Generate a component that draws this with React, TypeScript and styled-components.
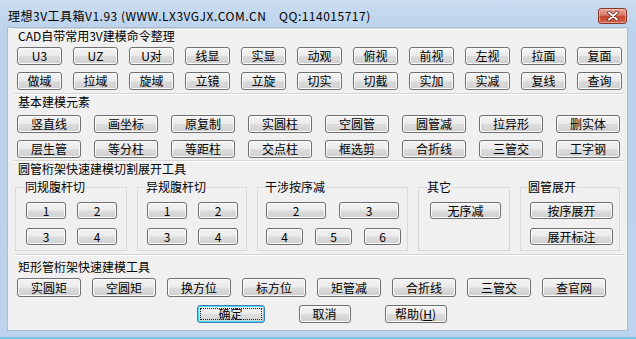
import React from 'react';
import styled, { createGlobalStyle } from 'styled-components';

const GlobalStyle = createGlobalStyle`
  html, body {
    margin: 0;
    padding: 0;
    background: #ffffff;
  }
  body {
    font-family: "Noto Sans CJK SC", "DejaVu Sans", sans-serif;
    font-size: 12px;
    color: #000;
  }
`;

const Window = styled.div`
  width: 636px;
  height: 339px;
  box-sizing: border-box;
  display: flex;
  flex-direction: column;
  background: linear-gradient(to bottom, #cadcf0 0px, #bcd3ec 30px, #bdd4ec 100%);
  border-bottom: 2px solid #78c6ee;
`;

const TitleBar = styled.div`
  height: 28px;
  box-sizing: border-box;
  padding: 3px 9px 0 8px;
  display: flex;
  align-items: center;
  justify-content: space-between;
`;

const Title = styled.div`
  font-size: 12px;
  line-height: 14px;
  letter-spacing: 0.5px;
  white-space: pre;
  color: #000;
`;

const CloseButton = styled.div`
  width: 29px;
  height: 16px;
  box-sizing: border-box;
  border: 1px solid #86352a;
  border-radius: 3px;
  background: linear-gradient(to bottom, #eaa797 0%, #d6796a 45%, #c5432c 50%, #d4664a 100%);
  box-shadow: inset 0 0 0 1px rgba(255, 220, 210, 0.45);
  display: flex;
  align-items: center;
  justify-content: center;
`;

const Client = styled.div`
  flex: 1;
  margin: 0 9px 7px 8px;
  padding: 0 3px 0 6px;
  background: #f0f0f0;
  box-shadow: 0 0 0 1px #a9bdd3;
  display: flex;
  flex-direction: column;
`;

const Section = styled.div<{ $pt: number; $pb: number }>`
  border-top: 1px solid #d5d5d5;
  box-shadow: inset 0 1px 0 #ffffff;
  padding: ${(p) => p.$pt}px 0 ${(p) => p.$pb}px 0;
`;

const SectionTitle = styled.div`
  height: 14px;
  line-height: 14px;
  padding-left: 4px;
  font-size: 12px;
`;

const ButtonRows = styled.div<{ $mt: number }>`
  margin-top: ${(p) => p.$mt}px;
  padding-left: 3px;
  display: flex;
  flex-direction: column;
  gap: 7px;
`;

const ButtonRow = styled.div<{ $gap: number }>`
  display: flex;
  gap: ${(p) => p.$gap}px;
`;

const Btn = styled.button<{ $w: number; $h: number }>`
  width: ${(p) => p.$w}px;
  height: ${(p) => p.$h}px;
  box-sizing: border-box;
  padding: 0;
  border: 1px solid #707070;
  border-radius: 3px;
  background: linear-gradient(to bottom, #f3f3f3 0%, #ebebeb 48%, #dddddd 52%, #cfcfcf 100%);
  box-shadow: inset 0 0 0 1px #fbfbfb;
  font-family: "Noto Sans CJK SC", "DejaVu Sans", sans-serif;
  font-size: 12px;
  line-height: 12px;
  color: #000;
  white-space: nowrap;
  display: flex;
  align-items: center;
  justify-content: center;
  flex-shrink: 0;
`;

const DefaultBtn = styled(Btn)`
  border-color: #3c7fb1;
  box-shadow: inset 0 0 0 1px #48d8fb;
  outline: 1px dotted #202020;
  outline-offset: -4px;
`;

const GroupsRow = styled.div`
  margin-top: 4px;
  padding-left: 1px;
  display: flex;
  gap: 10px;
  align-items: stretch;
`;

const Group = styled.fieldset<{ $w: number }>`
  width: ${(p) => p.$w}px;
  box-sizing: border-box;
  margin: 0;
  padding: 8px 0 5px 0;
  border: 1px solid #d9d9d9;
  border-radius: 0;
  min-width: 0;
`;

const GroupLegend = styled.legend<{ $ml: number }>`
  margin-left: ${(p) => p.$ml}px;
  padding: 0 1px 0 0;
  height: 14px;
  line-height: 14px;
  font-size: 12px;
`;

const GroupBody = styled.div<{ $pl: number }>`
  padding-left: ${(p) => p.$pl}px;
  display: flex;
  flex-direction: column;
  gap: 9px;
`;

const DialogButtons = styled.div`
  margin-top: 8px;
  padding-left: 5px;
  display: flex;
  justify-content: center;
  gap: 34px;
`;

const row1 = ['U3', 'UZ', 'U对', '线显', '实显', '动观', '俯视', '前视', '左视', '拉面', '复面'];
const row2 = ['做域', '拉域', '旋域', '立镜', '立旋', '切实', '切截', '实加', '实减', '复线', '查询'];
const row3 = ['竖直线', '画坐标', '原复制', '实圆柱', '空圆管', '圆管减', '拉异形', '删实体'];
const row4 = ['层生管', '等分柱', '等距柱', '交点柱', '框选剪', '合折线', '三管交', '工字钢'];
const row5 = ['实圆矩', '空圆矩', '换方位', '标方位', '矩管减', '合折线', '三管交', '查官网'];

const CloseIcon = () => (
  <svg width="12" height="10" viewBox="0 0 12 10">
    <path d="M2 1.5 L10 8.5 M10 1.5 L2 8.5" stroke="#5a1a10" strokeWidth="3.4" strokeLinecap="round" />
    <path d="M2 1.5 L10 8.5 M10 1.5 L2 8.5" stroke="#ffffff" strokeWidth="2" strokeLinecap="round" />
  </svg>
);

export default function App() {
  return (
    <>
      <GlobalStyle />
      <Window>
        <TitleBar>
          <Title>{'理想3V工具箱V1.93 (WWW.LX3VGJX.COM.CN    QQ:114015717)'}</Title>
          <CloseButton>
            <CloseIcon />
          </CloseButton>
        </TitleBar>
        <Client>
          <Section $pt={0} $pb={3}>
            <SectionTitle>CAD自带常用3V建模命令整理</SectionTitle>
            <ButtonRows $mt={4}>
              {[row1, row2].map((row, i) => (
                <ButtonRow key={i} $gap={11}>
                  {row.map((t) => (
                    <Btn key={t} $w={45} $h={18}>{t}</Btn>
                  ))}
                </ButtonRow>
              ))}
            </ButtonRows>
          </Section>

          <Section $pt={1} $pb={2}>
            <SectionTitle>基本建模元素</SectionTitle>
            <ButtonRows $mt={6}>
              {[row3, row4].map((row, i) => (
                <ButtonRow key={i} $gap={13}>
                  {row.map((t) => (
                    <Btn key={t} $w={64} $h={18}>{t}</Btn>
                  ))}
                </ButtonRow>
              ))}
            </ButtonRows>
          </Section>

          <Section $pt={1} $pb={3}>
            <SectionTitle>圆管桁架快速建模切割展开工具</SectionTitle>
            <GroupsRow>
              <Group $w={112}>
                <GroupLegend $ml={9}>同规腹杆切</GroupLegend>
                <GroupBody $pl={10}>
                  <ButtonRow $gap={11}>
                    <Btn $w={40} $h={17}>1</Btn>
                    <Btn $w={40} $h={17}>2</Btn>
                  </ButtonRow>
                  <ButtonRow $gap={11}>
                    <Btn $w={40} $h={17}>3</Btn>
                    <Btn $w={40} $h={17}>4</Btn>
                  </ButtonRow>
                </GroupBody>
              </Group>
              <Group $w={110}>
                <GroupLegend $ml={8}>异规腹杆切</GroupLegend>
                <GroupBody $pl={9}>
                  <ButtonRow $gap={11}>
                    <Btn $w={40} $h={17}>1</Btn>
                    <Btn $w={40} $h={17}>2</Btn>
                  </ButtonRow>
                  <ButtonRow $gap={11}>
                    <Btn $w={40} $h={17}>3</Btn>
                    <Btn $w={40} $h={17}>4</Btn>
                  </ButtonRow>
                </GroupBody>
              </Group>
              <Group $w={151}>
                <GroupLegend $ml={7}>干涉按序减</GroupLegend>
                <GroupBody $pl={8}>
                  <ButtonRow $gap={13}>
                    <Btn $w={60} $h={17}>2</Btn>
                    <Btn $w={60} $h={17}>3</Btn>
                  </ButtonRow>
                  <ButtonRow $gap={12}>
                    <Btn $w={37} $h={17}>4</Btn>
                    <Btn $w={37} $h={17}>5</Btn>
                    <Btn $w={37} $h={17}>6</Btn>
                  </ButtonRow>
                </GroupBody>
              </Group>
              <Group $w={92}>
                <GroupLegend $ml={8}>其它</GroupLegend>
                <GroupBody $pl={11}>
                  <ButtonRow $gap={0}>
                    <Btn $w={71} $h={17}>无序减</Btn>
                  </ButtonRow>
                </GroupBody>
              </Group>
              <Group $w={100}>
                <GroupLegend $ml={7}>圆管展开</GroupLegend>
                <GroupBody $pl={9}>
                  <ButtonRow $gap={0}>
                    <Btn $w={83} $h={17}>按序展开</Btn>
                  </ButtonRow>
                  <ButtonRow $gap={0}>
                    <Btn $w={83} $h={17}>展开标注</Btn>
                  </ButtonRow>
                </GroupBody>
              </Group>
            </GroupsRow>
          </Section>

          <Section $pt={5} $pb={0}>
            <SectionTitle>矩形管桁架快速建模工具</SectionTitle>
            <ButtonRows $mt={4}>
              <ButtonRow $gap={11}>
                {row5.map((t) => (
                  <Btn key={t} $w={64} $h={19}>{t}</Btn>
                ))}
              </ButtonRow>
            </ButtonRows>
          </Section>

          <DialogButtons>
            <DefaultBtn $w={68} $h={18}>确定</DefaultBtn>
            <Btn $w={52} $h={18}>取消</Btn>
            <Btn $w={62} $h={18}>
              帮助(<u>H</u>)
            </Btn>
          </DialogButtons>
        </Client>
      </Window>
    </>
  );
}
